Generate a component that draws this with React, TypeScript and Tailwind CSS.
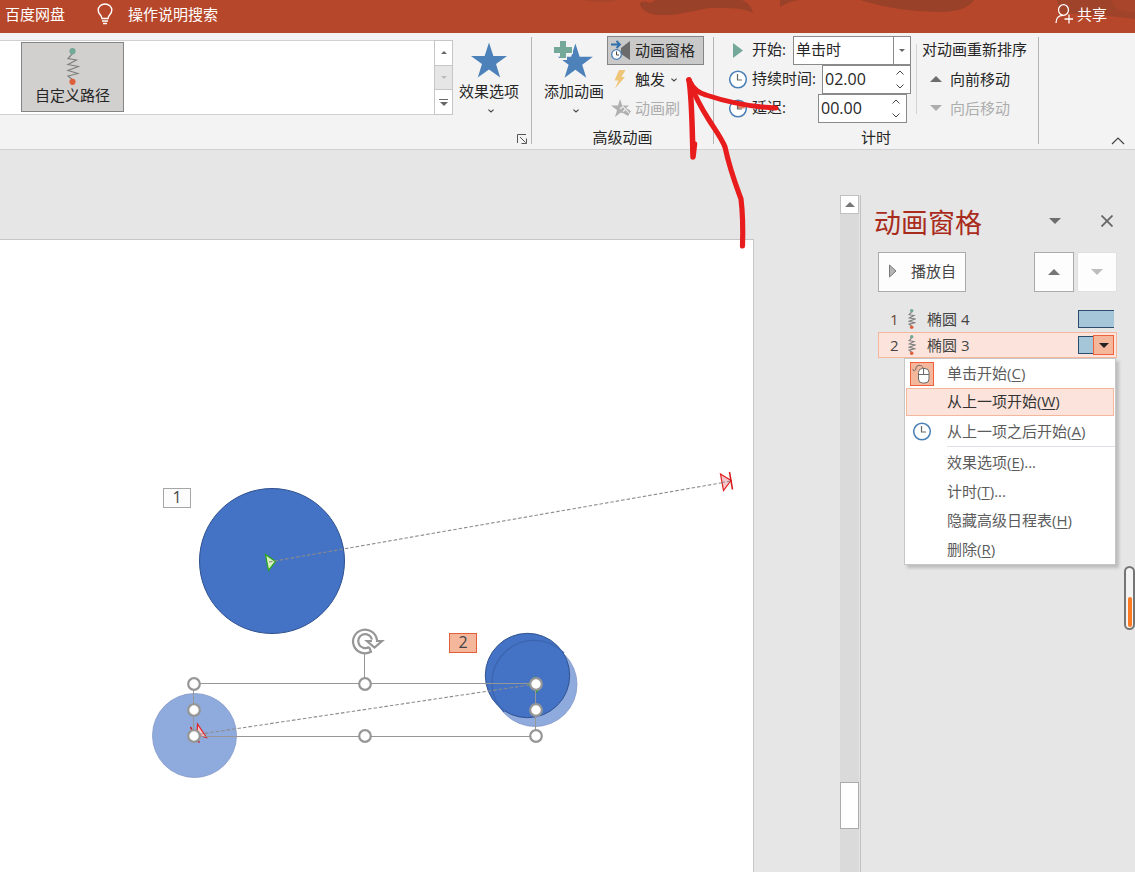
import React, { useState } from 'react';

const STAR = 'M20 1 L24.6 15.2 H39 L27.4 23.8 L31.8 38 L20 29.4 L8.2 38 L12.6 23.8 L1 15.2 H15.4 Z';

type TriProps = { className?: string; down?: boolean; size?: 'sm' | 'md' | 'lg' };

function Triangle({ className = '', down = false, size = 'lg' }: TriProps) {
  const w = { sm: 6, md: 10, lg: 12 }[size];
  const h = { sm: 3, md: 5, lg: 6 }[size];
  const d = down ? `M0 0 H${w} L${w / 2} ${h} Z` : `M0 ${h} H${w} L${w / 2} 0 Z`;
  return (
    <svg width={w} height={h} viewBox={`0 0 ${w} ${h}`} className={`shrink-0 ${className}`} aria-hidden="true">
      <path d={d} fill="currentColor" />
    </svg>
  );
}

function Chevron({ up = false, className = '' }: { up?: boolean; className?: string }) {
  return (
    <svg width="8" height="5" viewBox="0 0 8 5" className={`shrink-0 ${className}`} fill="none" stroke="currentColor" aria-hidden="true">
      <path d={up ? 'M.5 4.5 L4 1 L7.5 4.5' : 'M.5 .5 L4 4 L7.5 .5'} />
    </svg>
  );
}

function SmallChevron() {
  return (
    <svg width="6" height="4" viewBox="0 0 6 4" className="shrink-0" fill="none" stroke="#444" strokeWidth="1.1" aria-hidden="true">
      <path d="M.4 .6 L3 3 L5.6 .6" />
    </svg>
  );
}

function Clock({ slice = false }: { slice?: boolean }) {
  return (
    <svg width="19" height="19" viewBox="0 0 19 19" className="shrink-0" aria-hidden="true">
      <circle cx="9" cy="9.500" r="8.300" fill="#fff" stroke="#4a7fb5" strokeWidth="1.500" />
      {slice && <path d="M9 9.500 V4 H14.500 L15.800 6 V9.500 Z" fill="#e57f66" />}
      <path d="M8.500 4 V10 H13" fill="none" stroke="#666" strokeWidth="1.200" />
    </svg>
  );
}

function PathIcon({ small = false }: { small?: boolean }) {
  return (
    <svg width={small ? 8 : 14} height={small ? 20 : 37} viewBox="0 0 14 37" preserveAspectRatio="none" className="shrink-0" aria-hidden="true">
      <path
        d="M7 5 L2 10.500 L10.500 12 L2 16.500 L12.500 18.500 L2 22.500 L12 25.500 L2 28 L7 32"
        fill="none"
        stroke="#808080"
        strokeWidth={small ? 2 : 1.2}
      />
      <circle cx="6.500" cy="3.200" r="3.100" fill="#74a898" />
      <circle cx="6.500" cy="33.800" r="3.100" fill="#dd5f3c" />
    </svg>
  );
}

function Header() {
  return (
    <header className="relative flex h-[33px] shrink-0 items-center overflow-hidden bg-[#b7472a] pb-[6px] text-[15px] leading-5 text-white">
      <svg className="absolute right-0 top-0" width="575" height="33" viewBox="560 0 575 33" aria-hidden="true">
        <path d="M583 0 C596 3 608 3 618 0 Z" fill="#a8452a" />
        <path d="M640 4 C641 1 644 1 650 3 L656 0 H742 C749 3 752 8 753 13 C742 7 725 8 710 8 C690 11 680 16 656 15 C646 13 641 9 640 4 Z" fill="#9a4129" />
        <path d="M780 7 V0 H799 C791 1 785 4 780 7 Z" fill="#9a4129" />
        <path d="M860 0 H974 C970 7 958 12 942 12 C912 12 885 8 860 0 Z" fill="#9a4129" />
        <path d="M1057 0 H1112 C1114 8 1118 12 1135 12 V19 C1112 16 1090 14 1060 13 Z" fill="#9f432b" />
        <path d="M1112 0 H1135 V12 C1118 12 1114 8 1112 0 Z" fill="#a9452a" />
      </svg>
      <button className="relative ml-[5px]">百度网盘</button>
      <svg className="ml-8 shrink-0" width="16" height="22" viewBox="0 0 16 22" fill="none" stroke="#fff" strokeWidth="1.400" aria-hidden="true">
        <path d="M5 15.500 C5 12 1.200 11.500 1.200 7.300 C1.200 3.500 4.200 1 8 1 C11.800 1 14.800 3.500 14.800 7.300 C14.800 11.500 11 12 11 15.500 Z" />
        <path d="M5 18 H11 M6 20.500 H10" />
      </svg>
      <button className="ml-[15px]">操作说明搜索</button>
      <button className="relative ml-auto mr-7 flex items-center gap-1">
        <svg width="18" height="20" viewBox="0 0 18 20" fill="none" stroke="#fff" strokeWidth="1.300" aria-hidden="true">
          <ellipse cx="8.500" cy="6" rx="5" ry="5.300" />
          <path d="M1 19 C1 14 4 11.300 8 11.300 M14 10.500 V19.500 M9.500 15 H18" />
        </svg>
        共享
      </button>
    </header>
  );
}

function Gallery() {
  return (
    <div className="mt-[7px] flex h-[75px] min-w-0 flex-1 border-y border-[#d0d0d0] bg-white">
      <div className="flex-1 pl-[21px] pt-px">
        <button className="flex h-[70px] w-[103px] flex-col items-center border border-[#858585] bg-[#d2d0ce] pt-[5px] text-[15px] leading-5">
          <PathIcon />
          <span>自定义路径</span>
        </button>
      </div>
      <div className="-my-px flex w-[19px] flex-col border border-[#c6c6c6] text-[#666]">
        <button aria-label="上一行" className="flex flex-1 items-center justify-center bg-white">
          <Triangle size="sm" />
        </button>
        <button aria-label="下一行" className="flex flex-1 items-center justify-center border-y border-[#c6c6c6] bg-[#e6e6e6] text-[#bbb]">
          <Triangle size="sm" down />
        </button>
        <button aria-label="其他" className="flex flex-1 flex-col items-center justify-center gap-[2px] bg-white">
          <span className="h-px w-[9px] bg-[#666]" />
          <svg width="8" height="4" viewBox="0 0 8 4" aria-hidden="true">
            <path d="M0 0 H8 L4 4 Z" fill="currentColor" />
          </svg>
        </button>
      </div>
    </div>
  );
}

function Spinner({ id, value, onStep, onChange }: { id: string; value: string; onStep: (n: number) => void; onChange: (v: string) => void }) {
  return (
    <div className="flex h-[29px] w-[89px] border border-[#8a8a8a] bg-white text-[#444]">
      <input id={id} value={value} onChange={(e) => onChange(e.target.value)} className="w-0 flex-1 bg-transparent pb-[2px] pl-[2px] text-base leading-6 text-[#262626] outline-none" />
      <div className="flex w-5 flex-col">
        <button aria-label="增加" onClick={() => onStep(0.25)} className="flex flex-1 items-center justify-center">
          <Chevron up />
        </button>
        <button aria-label="减少" onClick={() => onStep(-0.25)} className="flex flex-1 items-center justify-center">
          <Chevron />
        </button>
      </div>
    </div>
  );
}

function Ribbon() {
  const [duration, setDuration] = useState('02.00');
  const [delay, setDelay] = useState('00.00');
  const step = (v: string, n: number) => Math.max(0, parseFloat(v) + n).toFixed(2).padStart(5, '0');
  return (
    <section className="flex h-[117px] shrink-0 border-b border-[#d1d1d1] bg-[#f3f3f3] text-[15px] leading-5 text-[#262626]">
      <Gallery />
      <div className="mb-[5px] mt-1 flex w-[79px] shrink-0 flex-col border-r border-[#b5b5b5] pl-[5px]">
        <button className="flex w-[62px] flex-col items-center pt-1">
          <svg width="38" height="38" viewBox="0 0 40 39" aria-hidden="true">
            <path d={STAR} fill="#4c82b9" />
          </svg>
          <span className="mt-[2px] whitespace-nowrap">效果选项</span>
          <span className="flex h-5 items-center pl-1">
            <SmallChevron />
          </span>
        </button>
        <button aria-label="显示其他效果选项" className="mr-1 mt-auto self-end">
          <svg width="10" height="10" viewBox="0 0 10 10" fill="none" stroke="#555" aria-hidden="true">
            <path d="M.5 9 V.5 H9 M3 3 L8.500 8.500 M9.500 4.500 V9.500 H4.500" />
          </svg>
        </button>
      </div>

      <div className="mb-[5px] mt-1 flex w-[182px] shrink-0 flex-col border-r border-[#b5b5b5]">
        <div className="flex">
          <button className="ml-3 flex w-[60px] flex-col items-center pt-1">
            <svg width="40" height="38" viewBox="0 0 40 38" className="shrink-0" aria-hidden="true">
              <g transform="translate(3 1.500) scale(.92 .93)">
                <path d={STAR} fill="#4c82b9" />
              </g>
              <path d="M6 -1 H13 V5 H19 V13 H13 V19 H6 V13 H0 V5 H6 Z" fill="#f3f3f3" />
              <path d="M6 -1 H12 V6 H18 V12 H12 V17 H6 V12 H0 V6 H6 Z" fill="#74a898" />
            </svg>
            <span className="mt-[2px] whitespace-nowrap">添加动画</span>
            <span className="flex h-5 items-center pl-1">
              <SmallChevron />
            </span>
          </button>
          <div className="ml-[3px] -mt-px flex flex-col">
            <button className="flex h-[29px] w-[97px] items-center gap-1 whitespace-nowrap border border-[#858585] bg-[#c9c9c9] pl-[3px]">
              <svg width="20" height="21" viewBox="0 0 20 21" className="shrink-0" aria-hidden="true">
                <path d="M10 8 L19 1 V20 L10 14 Z" fill="#6b6b6b" />
                <path d="M0 4.500 H9 M5.500 1 L9 4.500 L5.500 8" fill="none" stroke="#2e6fae" strokeWidth="1.800" />
                <circle cx="5.500" cy="14.500" r="4.800" fill="#fff" stroke="#4a7fb5" strokeWidth="1.300" />
                <path d="M5.500 11.500 V15 H8" fill="none" stroke="#444" />
              </svg>
              <span className="pb-[2px]">动画窗格</span>
            </button>
            <button className="flex h-[29px] items-center whitespace-nowrap pl-[7px]">
              <svg width="12" height="19" viewBox="0 0 12 19" className="mr-[9px] shrink-0" aria-hidden="true">
                <path d="M5 0 H11.500 L7.500 7 H11 L1 18.500 L4.500 10.500 H0.500 Z" fill="#efc57a" />
              </svg>
              <span className="pb-[2px]">触发</span>
              <span className="ml-[6px]">
                <SmallChevron />
              </span>
            </button>
            <button disabled className="flex h-[29px] items-center gap-1 whitespace-nowrap pl-1 text-[#adadad]">
              <svg width="20" height="19" viewBox="0 0 20 19" className="shrink-0" aria-hidden="true">
                <path d="M9 0 L11.200 6.500 H18 L15 9 L20 12 L17 17 L12 14 L9.500 13.800 L4 18 L6 11 L0 6.500 H7 Z" fill="#b0b0b0" />
                <path d="M9 10 L12 7.500 L18 14 M12 12.500 L15 10" stroke="#f3f3f3" strokeWidth="1.100" fill="none" />
              </svg>
              <span className="pb-[2px]">动画刷</span>
            </button>
          </div>
        </div>
        <div className="mt-auto text-center leading-[14px]">高级动画</div>
      </div>

      <div className="mb-[5px] mt-1 flex w-[325px] shrink-0 flex-col border-r border-[#b5b5b5]">
        <div className="-mt-px flex">
          <div className="flex w-[202px] flex-col pl-[15px]">
            <div className="flex h-[29px] items-center">
              <svg width="19" height="16" viewBox="0 0 19 16" className="shrink-0" aria-hidden="true">
                <path d="M4 0 L14 7.500 L4 15 Z" fill="#74a898" />
              </svg>
              <label htmlFor="start" className="ml-1 w-[41px] whitespace-nowrap pb-[3px]">开始:</label>
              <div className="relative flex h-[29px] w-[118px] border border-[#8a8a8a] bg-white">
                <select id="start" className="w-full appearance-none bg-transparent pb-[3px] pl-[2px] outline-none" defaultValue="单击时">
                  <option>单击时</option>
                  <option>与上一动画同时</option>
                  <option>上一动画之后</option>
                </select>
                <span className="pointer-events-none absolute inset-y-0 right-0 flex w-[17px] items-center justify-center border-l border-[#8a8a8a] text-[#666]">
                  <Triangle size="sm" down />
                </span>
              </div>
            </div>
            <div className="flex h-[29px] items-center">
              <Clock />
              <label htmlFor="duration" className="ml-1 w-[70px] whitespace-nowrap pb-[3px]">持续时间:</label>
              <Spinner id="duration" value={duration} onChange={setDuration} onStep={(n) => setDuration(step(duration, n))} />
            </div>
            <div className="flex h-[29px] items-center">
              <Clock slice />
              <label htmlFor="delay" className="ml-1 w-[66px] whitespace-nowrap pb-[3px]">延迟:</label>
              <Spinner id="delay" value={delay} onChange={setDelay} onStep={(n) => setDelay(step(delay, n))} />
            </div>
          </div>
          <div className="mt-2 h-[70px] w-px bg-[#d4d4d4]" />
          <div className="flex flex-col whitespace-nowrap pl-[5px]">
            <div className="flex h-[29px] items-center pb-[3px]">对动画重新排序</div>
            <button className="flex h-[29px] items-center gap-2 pb-[2px] pl-2">
              <Triangle className="text-[#6d6d6d]" />
              向前移动
            </button>
            <button disabled className="flex h-[29px] items-center gap-2 pb-[2px] pl-2 text-[#adadad]">
              <Triangle down />
              向后移动
            </button>
          </div>
        </div>
        <div className="mt-auto text-center leading-[14px]">计时</div>
      </div>

      <div className="flex w-24 shrink-0 items-end justify-end pb-1 pr-[10px]">
        <button aria-label="折叠功能区">
          <svg width="14" height="8" viewBox="0 0 14 8" fill="none" stroke="#444" strokeWidth="1.200" aria-hidden="true">
            <path d="M1 7 L7 1 L13 7" />
          </svg>
        </button>
      </div>
    </section>
  );
}

const HANDLES = [
  [194, 684], [365, 684], [536, 684],
  [194, 710], [536, 710],
  [194, 736], [365, 736], [536, 736],
];

function Slide() {
  return (
    <main className="flex min-w-0 flex-1 pr-[86px] pt-[89px]">
      <div className="relative min-h-[560px] flex-1 border-r border-t border-[#c6c6c6] bg-white">
        <svg className="absolute left-0 top-0" width="753" height="600" viewBox="0 240 753 600" aria-label="幻灯片">
          <circle cx="272" cy="561" r="72.500" fill="#4472c4" stroke="#2f528f" />
          <path d="M265.500 554.500 L275.500 561.500 L268.500 570.500 Z" fill="#d9f2c4" stroke="#2ea51f" strokeWidth="1.300" />
          <path d="M269 562 L732 481" stroke="#8c8c8c" strokeWidth="1.100" strokeDasharray="3.500 2" />
          <path d="M720.500 474 L731 480.500 L723.500 490.500 Z" fill="#f7c4cb" stroke="#e02020" strokeWidth="1.200" />
          <path d="M729.500 472 L732.500 489.500" stroke="#d81818" strokeWidth="1.500" />
          <path d="M722 482.500 L731 481" stroke="#8c8c8c" strokeDasharray="3 2" />

          <circle cx="194.500" cy="735.500" r="42" fill="#8faadc" stroke="#8197c8" strokeWidth=".8" />
          <circle cx="535" cy="684.500" r="42" fill="#8faadc" stroke="#8197c8" strokeWidth=".8" />
          <circle cx="527.500" cy="675.500" r="42.200" fill="#4472c4" stroke="#2f528f" />
          <path d="M504 712 A41.500 41.500 0 0 1 564 653" fill="none" stroke="#3c65b0" strokeWidth="1.300" />

          <path d="M197.500 724 L206.500 737.500 L197 735 Z" fill="#f7c4cb" stroke="#e02020" strokeWidth="1.200" />
          <path d="M190.500 727 L192 730 M197.500 740.500 L199.500 742.500" stroke="#d81818" strokeWidth="1.500" />
          <path d="M528 685 L532 682 M534 677 L536 679 M536 692 L538 690" stroke="#2ea51f" strokeWidth="2" />
          <path d="M194 735 L536 684" stroke="#8c8c8c" strokeWidth="1.100" strokeDasharray="3.500 2" />
          <path d="M193.500 683.500 H535.500 V736.500 H193.500 Z M364.500 654 V683" fill="none" stroke="#969696" />
          {HANDLES.map(([x, y]) => (
            <circle key={`${x}-${y}`} cx={x} cy={y} r="5.800" fill="#fff" stroke="#969696" strokeWidth="2.200" />
          ))}
          <g fill="none" stroke="#969696" strokeWidth="2.200">
            <path d="M377 640.500 A12 11.800 0 1 0 371 651.700 L369 647" />
            <path d="M372 639.500 A7 7 0 1 0 369 647" />
            <path d="M376 641 H382 L374.500 647.500 L367 641 H372" />
          </g>
        </svg>
        <div className="absolute left-[163px] top-[248px] flex h-5 w-7 items-center justify-center border border-[#a6a6a6] bg-[#fcfcfc] pb-[2px] text-base leading-4 text-[#444]">1</div>
        <div className="absolute left-[449px] top-[393px] flex h-5 w-7 items-center justify-center border border-[#e0603c] bg-[#f4b79c] pb-[2px] text-base leading-4 text-[#444]">2</div>
      </div>
    </main>
  );
}

function Scrollbar() {
  return (
    <div className="mt-[45px] flex w-[19px] shrink-0 flex-col bg-[#dadada] pb-[43px]">
      <button aria-label="向上滚动" className="flex h-[19px] items-center justify-center border border-[#c0c0c0] bg-white text-[#777]">
        <Triangle size="md" />
      </button>
      <div className="mt-auto h-[47px] border border-[#ababab] bg-white" />
    </div>
  );
}

const MENU: { text: string; k: string; tail?: string; icon?: 'mouse' | 'clock'; active?: boolean; rule?: boolean }[] = [
  { text: '单击开始', k: 'C', icon: 'mouse' },
  { text: '从上一项开始', k: 'W', active: true },
  { text: '从上一项之后开始', k: 'A', icon: 'clock' },
  { text: '效果选项', k: 'E', tail: '...', rule: true },
  { text: '计时', k: 'T', tail: '...' },
  { text: '隐藏高级日程表', k: 'H' },
  { text: '删除', k: 'R' },
];

function MouseIcon() {
  return (
    <span className="flex h-6 w-6 items-center justify-center border border-[#f0603c] bg-[#f4b79c]">
      <svg width="20" height="20" viewBox="0 0 20 20" fill="none" stroke="#6b6b6b" aria-hidden="true">
        <path d="M1 5 C1 8 4 7 4 4 C4 1 10 0 11 4" />
        <rect x="6.500" y="4.500" width="10.500" height="14.500" rx="4" fill="#fff" />
        <path d="M6.500 10.500 H17 M11.500 4.500 V10.500" />
      </svg>
    </span>
  );
}

function ContextMenu() {
  return (
    <div role="menu" className="absolute right-0 top-[25px] z-10 w-[212px] border border-[#c6c6c6] bg-white text-[15px] leading-5 text-[#5c5c5c] shadow-[3px_3px_3px_rgba(0,0,0,0.18)]">
      {MENU.map((m) => (
        <React.Fragment key={m.k}>
          {m.rule && <div className="mb-px ml-[42px] h-px bg-[#dcdfe4]" />}
          <button
            role="menuitem"
            className={
              m.active
                ? 'mx-px mb-px flex h-7 w-[208px] items-center border border-[#f4b79c] bg-[#fce4dc] text-[#333]'
                : 'flex h-[29px] w-full items-center pl-[2px]'
            }
          >
            <span className="flex w-[30px] shrink-0 items-center justify-center">
              {m.icon === 'mouse' && <MouseIcon />}
              {m.icon === 'clock' && <Clock />}
            </span>
            <span className="ml-[10px] whitespace-nowrap pb-[2px]">
              {m.text}(<u className="underline-offset-2">{m.k}</u>){m.tail}
            </span>
          </button>
        </React.Fragment>
      ))}
    </div>
  );
}

function Pane() {
  return (
    <aside className="ml-px mt-[45px] w-[275px] shrink-0 border-l border-[#c0c0c0] pl-[14px] pt-[7px] text-[15px] leading-5 text-[#444]">
      <div className="flex h-[42px] items-center">
        <h2 className="-ml-px text-[27px] leading-10 text-[#a92b1c]">动画窗格</h2>
        <button aria-label="任务窗格选项" className="-mt-1 ml-auto mr-10 text-[#6d6d6d]">
          <Triangle down />
        </button>
        <button aria-label="关闭" className="-mt-1 mr-[22px]">
          <svg width="12" height="12" viewBox="0 0 12 12" stroke="#666" strokeWidth="1.800" aria-hidden="true">
            <path d="M.5 .5 L11.500 11.500 M11.500 .5 L.5 11.500" />
          </svg>
        </button>
      </div>
      <div className="ml-[3px] mr-[18px] mt-2 flex">
        <button className="flex h-10 w-[88px] items-center border border-[#ababab] bg-[#fdfdfd] pb-[2px] pl-[10px]">
          <svg width="8" height="14" viewBox="0 0 8 14" className="mr-[14px] shrink-0" aria-hidden="true">
            <path d="M.5 1 L7 7 L.5 13 Z" fill="#b5b5b5" stroke="#777" />
          </svg>
          播放自
        </button>
        <button aria-label="上移" className="ml-auto flex h-10 w-10 items-center justify-center border border-[#ababab] bg-[#fdfdfd] text-[#777]">
          <Triangle />
        </button>
        <button aria-label="下移" disabled className="ml-[3px] flex h-10 w-10 items-center justify-center border border-[#e0e0e0] bg-[#fdfdfd] text-[#bdbdbd]">
          <Triangle down />
        </button>
      </div>
      <ol className="ml-[3px] mr-[18px] mt-[14px]">
        <li className="flex h-[26px] items-center pl-3">
          <span className="w-[18px] text-[#6b4a3a]">1</span>
          <PathIcon small />
          <span className="ml-[11px]">椭圆 4</span>
          <span className="ml-auto mr-[3px] h-[18px] w-9 border border-r-0 border-[#2a4d6e] bg-[#a5c6d9]" />
        </li>
        <li className="relative flex h-[26px] items-center border border-[#f4b79c] bg-[#fce4dc] pl-[11px]">
          <span className="w-[18px]">2</span>
          <PathIcon small />
          <span className="ml-[11px]">椭圆 3</span>
          <span className="ml-auto h-[18px] w-[15px] border border-r-0 border-[#2a4d6e] bg-[#a5c6d9]" />
          <button aria-label="效果菜单" className="mr-[2px] flex h-5 w-[21px] items-center justify-center border border-[#f0603c] bg-[#f4b79c] text-[#222]">
            <Triangle size="md" down />
          </button>
          <ContextMenu />
        </li>
      </ol>
    </aside>
  );
}

export default function App() {
  return (
    <div className="relative flex min-h-screen flex-col overflow-hidden bg-[#e6e6e6] font-['Open_Sans','Noto_Sans_CJK_SC',sans-serif]">
      <Header />
      <Ribbon />
      <div className="flex flex-1">
        <Slide />
        <Scrollbar />
        <Pane />
      </div>
      <div className="absolute right-0 top-[566px] flex h-16 w-[11px] items-end justify-center rounded-md border-2 border-[#757575] bg-[#f3f3f3] p-px">
        <span className="h-[30px] w-1 rounded-sm bg-[#fb7a22]" />
      </div>
      <svg className="pointer-events-none absolute right-0 top-0" width="475" height="260" viewBox="660 0 475 260" fill="none" stroke="#e81c1c" strokeLinecap="round" strokeLinejoin="round" aria-hidden="true">
        <path d="M689 80 C692 98 692 125 693 157 L694.500 144" strokeWidth="5.500" />
        <path d="M689 80 C694 90 699 93 706 95 C727 102 752 107 776 108" strokeWidth="5" />
        <path d="M689 80 C695 97 700 106 709 120 C716 131 722 139 725 147 C730 170 734 180 741 199 C743 215 743 230 742.500 246" strokeWidth="5.200" />
      </svg>
    </div>
  );
}
